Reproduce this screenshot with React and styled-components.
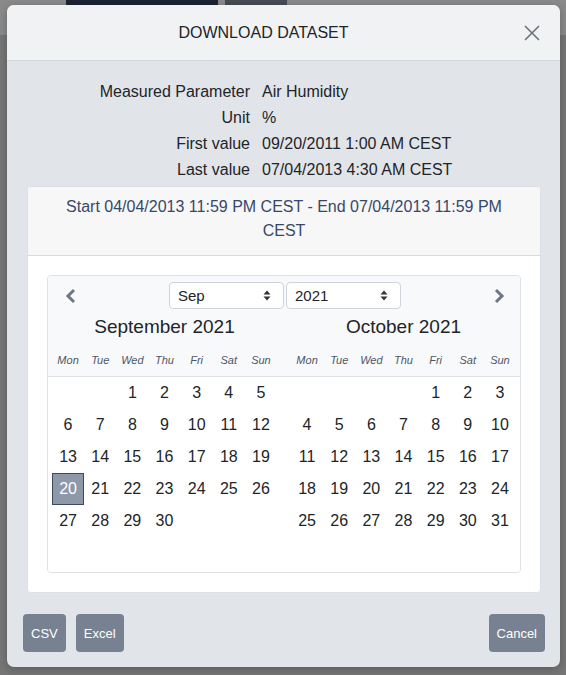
import styled, { createGlobalStyle } from "styled-components";

const GlobalStyle = createGlobalStyle`
  body {
    margin: 0;
    font-family: "Liberation Sans", Arial, sans-serif;
    background:
      linear-gradient(
          to right,
          #8a8a8a 0 66px,
          #1c2434 66px 218px,
          #8a8a8a 218px 225px,
          #474c55 225px 287px,
          #8a8a8a 287px
        )
        top left / 100% 35px no-repeat,
      #767676;
  }
`;

const WEEKDAYS = ["Mon", "Tue", "Wed", "Thu", "Fri", "Sat", "Sun"];

const buildMonth = (offset, days) => {
  const cells = [];
  for (let i = 0; i < 42; i++) {
    const d = i - offset + 1;
    cells.push(d >= 1 && d <= days ? d : null);
  }
  return cells;
};

const MONTHS = [
  { title: "September 2021", cells: buildMonth(2, 30), selected: 20 },
  { title: "October 2021", cells: buildMonth(4, 31), selected: null },
];

const INFO = [
  ["Measured Parameter", "Air Humidity"],
  ["Unit", "%"],
  ["First value", "09/20/2011 1:00 AM CEST"],
  ["Last value", "07/04/2013 4:30 AM CEST"],
];

const SelectArrows = () => (
  <svg width="8" height="11" viewBox="0 0 8 11">
    <path d="M4 0.5 L7.5 4.5 L0.5 4.5 Z" fill="#333" />
    <path d="M4 10.5 L7.5 6.5 L0.5 6.5 Z" fill="#333" />
  </svg>
);

const Chevron = ({ dir }) => (
  <svg width="12" height="16" viewBox="0 0 12 16">
    <path
      d={dir === "left" ? "M9 2 L3 8 L9 14" : "M3 2 L9 8 L3 14"}
      fill="none"
      stroke="#6e7787"
      strokeWidth="3"
    />
  </svg>
);

const App = () => {
  return (
    <>
      <GlobalStyle />
      <Page>
        <Modal>
          <Header>
            <Title>DOWNLOAD DATASET</Title>
            <CloseButton aria-label="close">
              <svg width="16" height="16" viewBox="0 0 16 16">
                <path
                  d="M1 1 L15 15 M15 1 L1 15"
                  stroke="#6c737d"
                  strokeWidth="1.6"
                  fill="none"
                />
              </svg>
            </CloseButton>
          </Header>
          <Body>
            <InfoGrid>
              {INFO.map(([label, value]) => (
                <InfoRow key={label}>
                  <Label>{label}</Label>
                  <Value>{value}</Value>
                </InfoRow>
              ))}
            </InfoGrid>
            <Card>
              <CardHeader>
                Start 04/04/2013 11:59 PM CEST - End 07/04/2013 11:59 PM CEST
              </CardHeader>
              <CardBody>
                <Calendar>
                  <CalHead>
                    <NavRow>
                      <NavArrow>
                        <Chevron dir="left" />
                      </NavArrow>
                      <Selects>
                        <FakeSelect>
                          Sep
                          <SelectArrows />
                        </FakeSelect>
                        <FakeSelect>
                          2021
                          <SelectArrows />
                        </FakeSelect>
                      </Selects>
                      <NavArrow>
                        <Chevron dir="right" />
                      </NavArrow>
                    </NavRow>
                    <MonthsRow>
                      {MONTHS.map((m) => (
                        <div key={m.title}>
                          <MonthTitle>{m.title}</MonthTitle>
                          <WeekRow>
                            {WEEKDAYS.map((w) => (
                              <WeekDay key={w}>{w}</WeekDay>
                            ))}
                          </WeekRow>
                        </div>
                      ))}
                    </MonthsRow>
                  </CalHead>
                  <CalBody>
                    {MONTHS.map((m) => (
                      <DayGrid key={m.title}>
                        {m.cells.map((d, i) => (
                          <Day key={i} $selected={d !== null && d === m.selected}>
                            {d}
                          </Day>
                        ))}
                      </DayGrid>
                    ))}
                  </CalBody>
                </Calendar>
              </CardBody>
            </Card>
          </Body>
          <Footer>
            <ButtonGroup>
              <Button>CSV</Button>
              <Button>Excel</Button>
            </ButtonGroup>
            <Button>Cancel</Button>
          </Footer>
        </Modal>
      </Page>
    </>
  );
};

export default App;

const Page = styled.div`
  padding: 5px 6px 8px 7px;
`;

const Modal = styled.div`
  width: 553px;
  background: #e1e4e8;
  border-radius: 7px;
  box-shadow: 0 2px 8px rgba(0, 0, 0, 0.25);
  overflow: hidden;
`;

const Header = styled.div`
  display: flex;
  align-items: center;
  height: 55px;
  padding: 0 10px 0 16px;
  background: #f0f2f4;
  border-bottom: 1px solid #d2d7dd;
`;

const Title = styled.div`
  flex: 1;
  text-align: center;
  font-size: 16px;
  color: #212529;
`;

const CloseButton = styled.button`
  display: flex;
  align-items: center;
  justify-content: center;
  width: 36px;
  height: 36px;
  margin-left: 10px;
  padding: 0;
  border: none;
  background: transparent;
`;

const Body = styled.div`
  padding: 18px 19px 0 20px;
`;

const InfoGrid = styled.div`
  display: flex;
  flex-direction: column;
`;

const InfoRow = styled.div`
  display: grid;
  grid-template-columns: 223px 1fr;
  column-gap: 12px;
  line-height: 26px;
  font-size: 16px;
  color: #212529;
`;

const Label = styled.div`
  text-align: right;
`;

const Value = styled.div``;

const Card = styled.div`
  margin-top: 3px;
  background: #fff;
  border: 1px solid #dcdfe3;
  border-radius: 4px;
  overflow: hidden;
`;

const CardHeader = styled.div`
  padding: 8px 28px 12px;
  background: #f7f7f7;
  border-bottom: 1px solid #dadada;
  text-align: center;
  font-size: 16px;
  line-height: 24px;
  color: #37476a;
`;

const CardBody = styled.div`
  padding: 19px;
`;

const Calendar = styled.div`
  border: 1px solid #dee2e6;
  border-radius: 4px;
  overflow: hidden;
`;

const CalHead = styled.div`
  padding: 6px 4px 4px;
  background: #f8f9fa;
  border-bottom: 1px solid #dee2e6;
`;

const NavRow = styled.div`
  display: flex;
  align-items: center;
  justify-content: space-between;
  height: 27px;
  padding: 0 11px 0 13px;
`;

const NavArrow = styled.div`
  display: flex;
  align-items: center;
`;

const Selects = styled.div`
  display: flex;
  gap: 2px;
`;

const FakeSelect = styled.div`
  display: flex;
  align-items: center;
  justify-content: space-between;
  box-sizing: border-box;
  width: 115px;
  height: 27px;
  padding: 0 12px 0 8px;
  background: #fff;
  border: 1px solid #ced4da;
  border-radius: 4px;
  font-size: 15px;
  color: #212529;
`;

const MonthsRow = styled.div`
  display: grid;
  grid-template-columns: 1fr 1fr;
  column-gap: 14px;
`;

const MonthTitle = styled.div`
  margin-top: 6px;
  text-align: center;
  font-size: 19px;
  line-height: 24px;
  color: #212529;
`;

const WeekRow = styled.div`
  display: grid;
  grid-template-columns: repeat(7, 1fr);
  margin-top: 9px;
  height: 24px;
  align-items: center;
`;

const WeekDay = styled.div`
  text-align: center;
  font-size: 11px;
  font-style: italic;
  color: #4d5668;
`;

const CalBody = styled.div`
  display: grid;
  grid-template-columns: 1fr 1fr;
  column-gap: 14px;
  padding: 0 4px 3px;
  background: #fff;
`;

const DayGrid = styled.div`
  display: grid;
  grid-template-columns: repeat(7, 1fr);
  grid-auto-rows: 32px;
`;

const Day = styled.div`
  display: flex;
  align-items: center;
  justify-content: center;
  box-sizing: border-box;
  font-size: 16px;
  color: ${(p) => (p.$selected ? "#fff" : "#212529")};
  background: ${(p) => (p.$selected ? "#8d98a9" : "transparent")};
  border: 1px solid ${(p) => (p.$selected ? "#3c4a5e" : "transparent")};
`;

const Footer = styled.div`
  display: flex;
  justify-content: space-between;
  align-items: center;
  padding: 21px 15px 15px 16px;
`;

const ButtonGroup = styled.div`
  display: flex;
  gap: 10px;
`;

const Button = styled.button`
  height: 38px;
  padding: 0 8px;
  border: none;
  border-radius: 4px;
  background: #778191;
  color: #fff;
  font-family: "Liberation Sans", Arial, sans-serif;
  font-size: 13px;
`;
